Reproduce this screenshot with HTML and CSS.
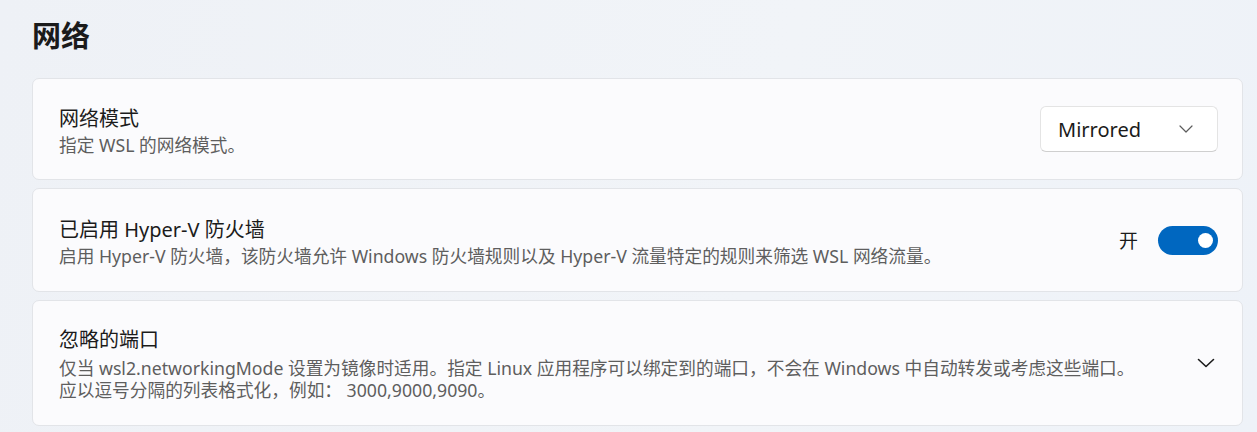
FILE: index.html
```html
<!DOCTYPE html>
<html lang="zh-CN">
<head>
<meta charset="utf-8">
<link rel="stylesheet" href="styles.css">
</head>
<body>
<main class="page">
  <h1 class="heading">网络</h1>
  <section class="card">
    <div class="text">
      <div class="title">网络模式</div>
      <div class="desc">指定 WSL 的网络模式。</div>
    </div>
    <div class="select">
      <span>Mirrored</span>
      <svg class="select-chev" width="14" height="8" viewBox="0 0 14 8"><path d="M1 1l6 6 6-6" fill="none" stroke="#5c5c5c" stroke-width="1.2" stroke-linecap="round" stroke-linejoin="round"/></svg>
    </div>
  </section>
  <section class="card card-mid">
    <div class="text">
      <div class="title">已启用 Hyper-V 防火墙</div>
      <div class="desc">启用 Hyper-V 防火墙，该防火墙允许 Windows 防火墙规则以及 Hyper-V 流量特定的规则来筛选 WSL 网络流量。</div>
    </div>
    <div class="toggle-wrap">
      <span class="toggle-label">开</span>
      <span class="toggle"><span class="knob"></span></span>
    </div>
  </section>
  <section class="card card-tall">
    <div class="text">
      <div class="title title-spaced">忽略的端口</div>
      <div class="desc">仅当 wsl2.networkingMode 设置为镜像时适用。指定 Linux 应用程序可以绑定到的端口，不会在 Windows 中自动转发或考虑这些端口。<br>应以逗号分隔的列表格式化，例如： 3000,9000,9090。</div>
    </div>
    <svg class="expand-chev" width="18" height="10" viewBox="0 0 18 10"><path d="M1.5 1.5l7.5 7 7.5-7" fill="none" stroke="#1b1b1b" stroke-width="1.6" stroke-linecap="round" stroke-linejoin="round"/></svg>
  </section>
</main>
</body>
</html>
```
FILE: styles.css
```css
html, body {
  margin: 0;
  padding: 0;
}
body {
  width: 1257px;
  height: 432px;
  overflow: hidden;
  background: linear-gradient(100deg, #eef1f6 0%, #f1f4f8 60%, #eef2f8 100%);
  font-family: "Noto Sans", "Noto Sans CJK SC", sans-serif;
  color: #1b1b1b;
}
.page {
  padding: 14px 14px 0 32px;
  display: flex;
  flex-direction: column;
  gap: 8px;
}
.heading {
  margin: 0 0 16px 0;
  font-size: 29px;
  line-height: 40px;
  font-weight: 600;
  color: #1b1b1b;
  font-family: "Noto Sans CJK SC", sans-serif;
}
.card {
  display: flex;
  align-items: center;
  justify-content: space-between;
  height: 102px;
  box-sizing: border-box;
  padding: 2px 24px 0 26px;
  background: #fbfbfd;
  border: 1px solid #e2e4e8;
  border-radius: 7px;
}
.card-mid {
  height: 104px;
}
.card-tall {
  height: 126px;
  padding-top: 0;
}
.text {
  display: flex;
  flex-direction: column;
}
.title {
  font-size: 20px;
  line-height: 28px;
  margin-bottom: 1px;
  color: #1b1b1b;
}
.title-spaced {
  margin-bottom: 3px;
}
.desc {
  font-size: 17.7px;
  line-height: 22px;
  color: #5e5e5e;
}
.select {
  width: 178px;
  height: 46px;
  box-sizing: border-box;
  display: flex;
  align-items: center;
  justify-content: space-between;
  padding: 0 24px 0 17px;
  margin-top: -2px;
  background: #ffffff;
  border: 1px solid #e4e4e4;
  border-bottom-color: #cfcfcf;
  border-radius: 6px;
  font-size: 20px;
  color: #1b1b1b;
}
.toggle-wrap {
  display: flex;
  align-items: center;
  gap: 20px;
  margin-top: -2px;
}
.toggle-label {
  font-size: 19px;
  color: #1b1b1b;
}
.toggle {
  width: 60px;
  height: 29px;
  border-radius: 15px;
  background: #0067c0;
  display: flex;
  align-items: center;
  justify-content: flex-end;
  padding-right: 5px;
  box-sizing: border-box;
}
.knob {
  width: 15px;
  height: 15px;
  border-radius: 50%;
  background: #ffffff;
}
.expand-chev {
  margin-right: 3px;
}
```
